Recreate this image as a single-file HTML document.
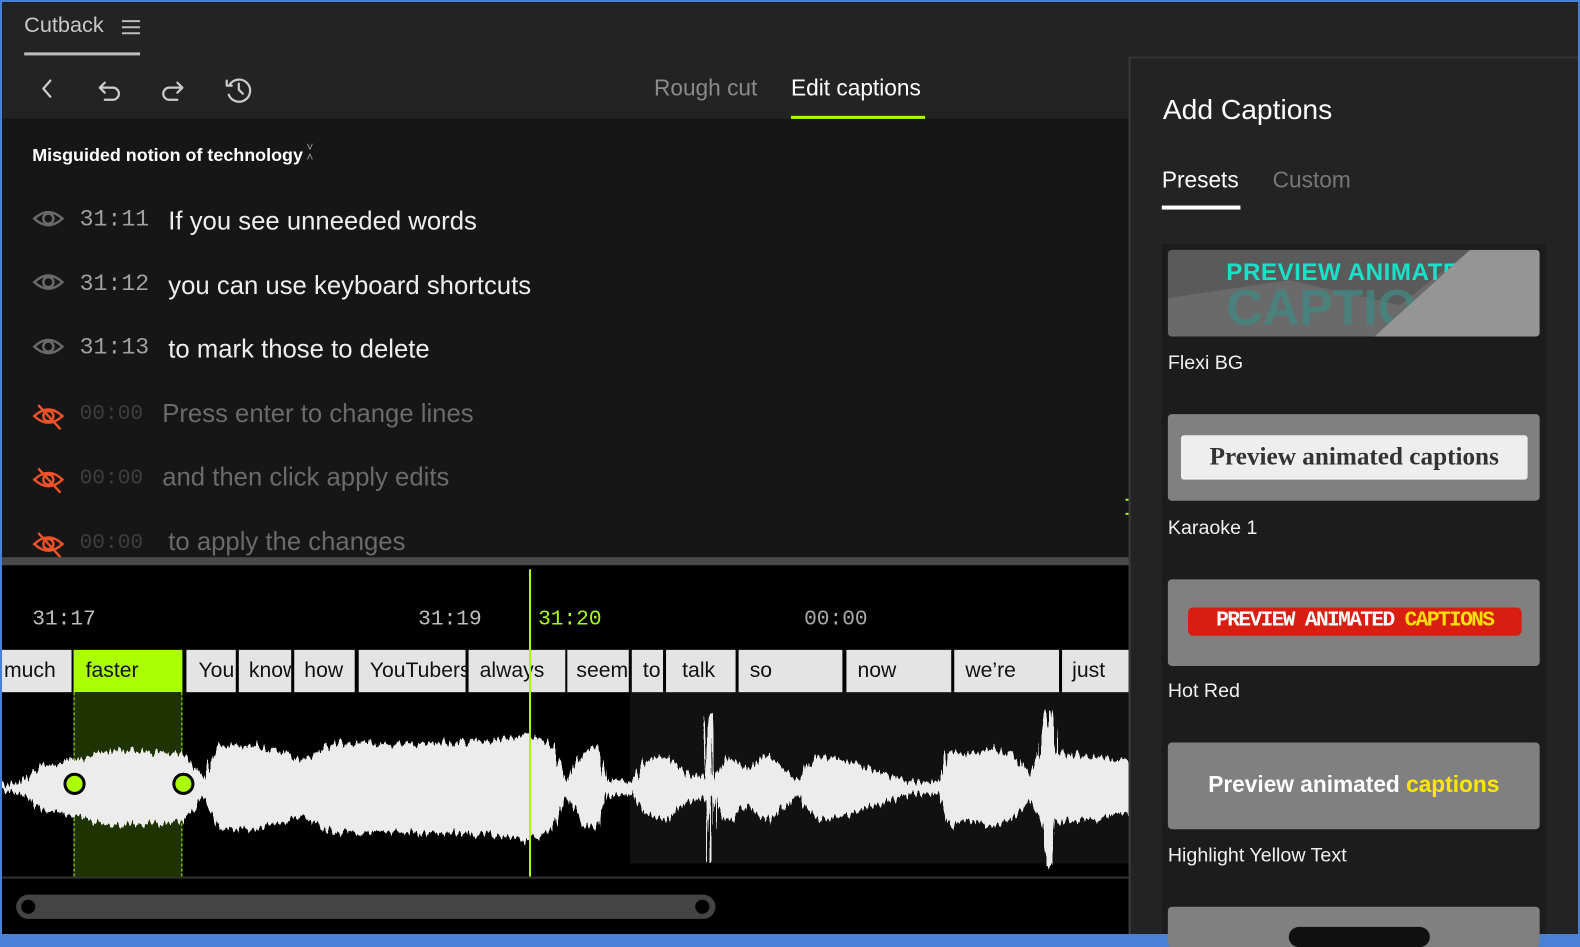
<!DOCTYPE html>
<html><head><meta charset="utf-8"><style>
*{margin:0;padding:0;box-sizing:border-box}
body{width:1580px;height:936px;overflow:hidden;background:#4a80d6;font-family:"Liberation Sans",sans-serif;position:relative}
#sc{position:absolute;left:0;top:0;width:1568px;height:929px;transform:scale(1.00765,1.00753);transform-origin:0 0;background:#4a80d6}
.a{position:absolute}
.mono{font-family:"Liberation Mono",monospace}
.w{position:absolute;top:643px;height:42px;background:#e4e4e4;color:#111;font-size:21px;line-height:42px;padding-left:6px;overflow:hidden;white-space:nowrap}
.card{position:absolute;left:1159px;width:369px;height:86px;background:#808080;border-radius:4px;overflow:hidden}
.lbl{position:absolute;left:1159px;color:#f0f0f0;font-size:19.5px}
.t{position:absolute;font-size:25.5px}
</style></head><body>
<div id="sc">
<div class="a" style="left:2px;top:2px;width:1564px;height:925px;background:#000;overflow:hidden">
<div class="a" style="left:0;top:0;width:1576px;height:116px;background:#232323"></div>
<div class="a" style="left:22px;top:11px;color:#c8c8c8;font-size:21.5px">Cutback</div>
<svg class="a" style="left:118px;top:17px" width="20" height="16"><path d="M1 2H19M1 8H19M1 14H19" stroke="#bbb" stroke-width="2"/></svg>
<div class="a" style="left:22px;top:50px;width:115px;height:3px;background:#bdbdbd"></div>
<svg class="a" style="left:30px;top:72px" width="230" height="30" fill="none" stroke="#ccc" stroke-width="2.2" stroke-linecap="round" stroke-linejoin="round">
<path d="M18 6L11 14L18 22"/>
<path d="M72 8L67 13L72 18M67 13H80A6 6 0 0 1 80 25H72"/>
<path d="M144 8L149 13L144 18M149 13H136A6 6 0 0 0 136 25H144"/>
<path d="M196 10A11 11 0 1 1 195 20M193 6V11H198M205 9V15L209 19"/>
</svg>
<div class="a" style="left:647px;top:73px;color:#8a8a8a;font-size:22.5px">Rough cut</div>
<div class="a" style="left:783px;top:73px;color:#fff;font-size:22.5px">Edit captions</div>
<div class="a" style="left:783px;top:113px;width:133px;height:4px;background:#aaff00"></div>
<div class="a" style="left:0;top:116px;width:1120px;height:435px;background:#161616"></div>
<div class="a" style="left:30px;top:142px;color:#fff;font-size:17.8px;font-weight:bold">Misguided notion of technology</div>
<div class="a" style="left:302px;top:139px;color:#999;font-size:12px;line-height:10px">&#x2C5;<br>&#x2C4;</div>
<svg class="a" style="left:30px;top:200px" width="36" height="360" fill="none" stroke-width="2.4">
<g stroke="#6a6a6a"><path d="M2 15Q16 2 30 15Q16 28 2 15Z"/><circle cx="16" cy="15" r="5"/>
<path d="M2 78Q16 65 30 78Q16 91 2 78Z"/><circle cx="16" cy="78" r="5"/>
<path d="M2 142Q16 129 30 142Q16 155 2 142Z"/><circle cx="16" cy="142" r="5"/></g>
<g stroke="#f0522a"><path d="M2 211Q16 198 30 211Q16 224 2 211Z"/><circle cx="16" cy="211" r="5"/><path d="M6 200L28 224"/>
<path d="M2 274Q16 261 30 274Q16 287 2 274Z"/><circle cx="16" cy="274" r="5"/><path d="M6 263L28 287"/>
<path d="M2 338Q16 325 30 338Q16 351 2 338Z"/><circle cx="16" cy="338" r="5"/><path d="M6 327L28 351"/></g>
</svg>
<div class="a mono" style="left:77px;top:203px;color:#a0a0a0;font-size:23px">31:11</div>
<div class="t" style="left:165px;top:204px;color:#eee">If you see unneeded words</div>
<div class="a mono" style="left:77px;top:267px;color:#a0a0a0;font-size:23px">31:12</div>
<div class="t" style="left:165px;top:268px;color:#eee">you can use keyboard shortcuts</div>
<div class="a mono" style="left:77px;top:330px;color:#a0a0a0;font-size:23px">31:13</div>
<div class="t" style="left:165px;top:331px;color:#eee">to mark those to delete</div>
<div class="a mono" style="left:77px;top:398px;color:#3e3e3e;font-size:21px">00:00</div>
<div class="t" style="left:159px;top:395px;color:#6a6a6a">Press enter to change lines</div>
<div class="a mono" style="left:77px;top:462px;color:#3e3e3e;font-size:21px">00:00</div>
<div class="t" style="left:159px;top:458px;color:#6a6a6a">and then click apply edits</div>
<div class="a mono" style="left:77px;top:526px;color:#3e3e3e;font-size:21px">00:00</div>
<div class="t" style="left:165px;top:522px;color:#6a6a6a">to apply the changes</div>
<div class="a" style="left:1115px;top:493px;width:4px;height:16px;border-top:2px dashed #aaff00;border-bottom:2px dashed #aaff00"></div>
<div class="a" style="left:0;top:551px;width:1120px;height:8px;background:#4a4a4a"></div>
<div class="a" style="left:623px;top:683px;width:497px;height:172px;background:#111"></div>
<div class="a mono" style="left:30px;top:602px;color:#c0c0c0;font-size:21px">31:17</div>
<div class="a mono" style="left:413px;top:602px;color:#c0c0c0;font-size:21px">31:19</div>
<div class="a mono" style="left:532px;top:602px;color:#aaff00;font-size:21px">31:20</div>
<div class="a mono" style="left:796px;top:602px;color:#aaa;font-size:21px">00:00</div>
<div class="w" style="left:0;width:69px;padding-left:2px">much</div>
<div class="w" style="left:71px;width:108px;background:#aaff00;padding-left:12px">faster</div>
<div class="w" style="left:183px;width:49px;padding-left:12px">You</div>
<div class="w" style="left:235px;width:52px;padding-left:10px">know</div>
<div class="w" style="left:290px;width:60px;padding-left:10px">how</div>
<div class="w" style="left:354px;width:106px;padding-left:11px">YouTubers</div>
<div class="w" style="left:463px;width:96px;padding-left:11px">always</div>
<div class="w" style="left:561px;width:61px;padding-left:9px">seem</div>
<div class="w" style="left:625px;width:31px;padding-left:11px">to</div>
<div class="w" style="left:659px;width:69px;padding-left:16px">talk</div>
<div class="w" style="left:731px;width:103px;padding-left:11px">so</div>
<div class="w" style="left:838px;width:104px;padding-left:11px">now</div>
<div class="w" style="left:945px;width:104px;padding-left:11px">we’re</div>
<div class="w" style="left:1052px;width:68px;padding-left:10px">just</div>
<div class="a" style="left:71px;top:685px;width:108px;height:183px;background:#1e3300;border-left:1px dashed #aaff00;border-right:1px dashed #aaff00"></div>
<svg class="a" style="left:0;top:683px" width="1120" height="190">
<defs><clipPath id="c"><rect x="71" y="0" width="108" height="190"/></clipPath>
<filter id="j" x="0" y="-0.2" width="1" height="1.4"><feTurbulence type="fractalNoise" baseFrequency="0.35 0.01" numOctaves="2" seed="3"/><feDisplacementMap in="SourceGraphic" scale="16" yChannelSelector="R" xChannelSelector="A"/></filter></defs>
<g filter="url(#j)">
<path id="wv" fill="#ececec" d="M0 94L20 91L40 74L60 72L73 69L90 64L120 59L180 64L200 89L215 54L250 56L300 69L330 52L400 54L450 52L500 49L520 44L545 54L560 89L575 64L590 54L600 89L625 91L640 69L660 64L680 84L698 86L700 24L704 24L706 86L720 64L740 79L760 64L790 89L810 64L830 69L850 74L880 84L900 91L930 91L940 59L960 64L980 59L1000 64L1020 84L1030 64L1037 19L1041 19L1045 64L1070 64L1100 69L1120 69L1120 120L1100 125L1070 130L1045 130L1041 175L1037 175L1030 130L1020 110L1000 130L980 135L960 130L940 135L930 103L900 103L880 110L850 120L830 125L810 130L790 105L760 130L740 115L720 130L706 108L704 170L700 170L698 108L680 110L660 130L640 125L625 103L600 105L590 140L575 130L560 105L545 140L520 150L500 145L450 142L400 140L330 142L300 125L250 138L215 140L200 105L180 130L120 135L90 130L73 125L60 122L40 120L20 103L0 100Z"/>
<use href="#wv" clip-path="url(#c)" fill="#d9f2c2"/>
</g>
</svg>
<div class="a" style="left:61px;top:765px;width:22px;height:22px;border-radius:50%;background:#aaff00;border:3px solid #000"></div>
<div class="a" style="left:169px;top:765px;width:22px;height:22px;border-radius:50%;background:#aaff00;border:3px solid #000"></div>
<div class="a" style="left:523px;top:563px;width:2px;height:305px;background:#aaff00"></div>
<div class="a" style="left:0;top:868px;width:1120px;height:2px;background:#333"></div>
<div class="a" style="left:14px;top:886px;width:694px;height:24px;border-radius:12px;background:#444"></div>
<div class="a" style="left:16px;top:888px;width:20px;height:20px;border-radius:50%;background:#000;border:3px solid #444"></div>
<div class="a" style="left:685px;top:888px;width:20px;height:20px;border-radius:50%;background:#000;border:3px solid #444"></div>
<div class="a" style="left:1118px;top:54px;width:460px;height:880px;background:#232323;border-left:2px solid #3a3a3a;border-top:2px solid #333"></div>
<div class="a" style="left:1152px;top:91px;color:#fff;font-size:28px">Add Captions</div>
<div class="a" style="left:1151px;top:164px;color:#fff;font-size:22.5px">Presets</div>
<div class="a" style="left:1261px;top:164px;color:#777;font-size:22.5px">Custom</div>
<div class="a" style="left:1151px;top:202px;width:78px;height:4px;background:#fff"></div>
<div class="a" style="left:1151px;top:240px;width:381px;height:700px;background:#1c1c1c"></div>
</div>
<div class="card" style="top:248px;background:#5a5a5a">
<svg width="369" height="86" style="position:absolute;left:0;top:0"><path d="M0 48L120 30L230 55L300 0L369 0L369 86L0 86Z" fill="#6a6a6a"/></svg>
<div style="position:absolute;left:58px;top:9px;color:#19e0c8;font-weight:bold;font-size:24px;white-space:nowrap;letter-spacing:0.5px">PREVIEW ANIMATE</div>
<div style="position:absolute;left:58px;top:28px;color:#3e8c85;opacity:.7;font-weight:bold;font-size:50px;white-space:nowrap">CAPTIO</div>
<svg width="369" height="86" style="position:absolute;left:0;top:0"><path d="M205 86L300 0L369 0L369 86Z" fill="#959595"/></svg>
</div>
<div class="lbl" style="top:349px">Flexi BG</div>
<div class="card" style="top:411px"><div style="position:absolute;left:13px;top:21px;width:344px;height:44px;background:#eee;border-radius:3px;color:#333;font-family:'Liberation Serif',serif;font-weight:bold;font-size:25px;text-align:center;line-height:44px">Preview animated captions</div></div>
<div class="lbl" style="top:513px">Karaoke 1</div>
<div class="card" style="top:575px"><div style="position:absolute;left:20px;top:28px;width:331px;height:28px;background:#d81e10;border-radius:5px;color:#fff;font-weight:bold;font-size:21px;text-align:center;line-height:28px;font-family:'Liberation Mono',monospace;letter-spacing:-1.6px;white-space:nowrap">PREVIEW ANIMATED <span style="color:#ffe000">CAPTIONS</span></div></div>
<div class="lbl" style="top:675px">Hot Red</div>
<div class="card" style="top:737px"><div style="position:absolute;left:0;top:29px;width:369px;text-align:center;color:#fff;font-weight:bold;font-size:22.5px;white-space:nowrap">Preview animated <span style="color:#ffe800">captions</span></div></div>
<div class="lbl" style="top:838px">Highlight Yellow Text</div>
<div class="card" style="top:900px;height:40px"><div style="position:absolute;left:120px;top:20px;width:140px;height:20px;border-radius:10px;background:#111"></div></div>
</div>
</body></html>
